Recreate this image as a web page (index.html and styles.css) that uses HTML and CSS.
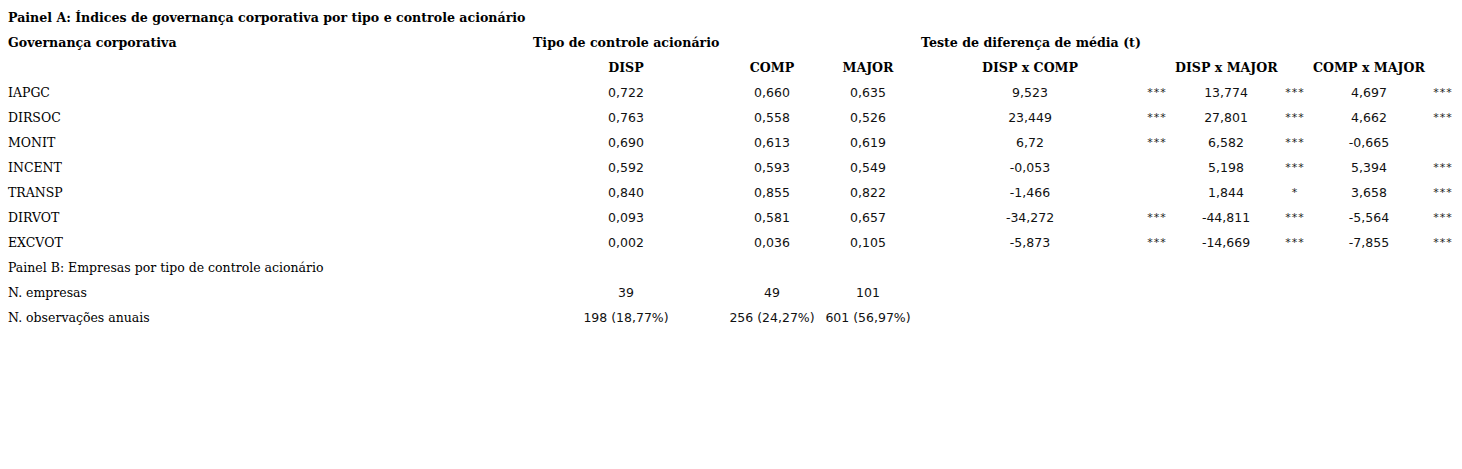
FILE: index.html
```html
<!DOCTYPE html>
<html lang="pt">
<head>
<meta charset="utf-8">
<title>Painel A</title>
<link rel="stylesheet" href="styles.css">
</head>
<body>
<div class="table">
  <div class="row title"><span class="b">Painel A: Índices de governança corporativa por tipo e controle acionário</span></div>
  <div class="row">
    <span class="b">Governança corporativa</span>
    <span class="b span3">Tipo de controle acionário</span>
    <span></span>
    <span class="b span6">Teste de diferença de média (t)</span>
  </div>
  <div class="row">
    <span></span>
    <span class="b c">DISP</span><span class="b c">COMP</span><span class="b c">MAJOR</span><span></span>
    <span class="b c">DISP x COMP</span><span></span>
    <span class="b c">DISP x MAJOR</span><span></span>
    <span class="b c">COMP x MAJOR</span><span></span>
  </div>
  <div class="row"><span>IAPGC</span><span class="n">0,722</span><span class="n">0,660</span><span class="n">0,635</span><span></span><span class="n">9,523</span><span class="s">***</span><span class="n">13,774</span><span class="s">***</span><span class="n">4,697</span><span class="s">***</span></div>
  <div class="row"><span>DIRSOC</span><span class="n">0,763</span><span class="n">0,558</span><span class="n">0,526</span><span></span><span class="n">23,449</span><span class="s">***</span><span class="n">27,801</span><span class="s">***</span><span class="n">4,662</span><span class="s">***</span></div>
  <div class="row"><span>MONIT</span><span class="n">0,690</span><span class="n">0,613</span><span class="n">0,619</span><span></span><span class="n">6,72</span><span class="s">***</span><span class="n">6,582</span><span class="s">***</span><span class="n">-0,665</span><span class="s"></span></div>
  <div class="row"><span>INCENT</span><span class="n">0,592</span><span class="n">0,593</span><span class="n">0,549</span><span></span><span class="n">-0,053</span><span class="s"></span><span class="n">5,198</span><span class="s">***</span><span class="n">5,394</span><span class="s">***</span></div>
  <div class="row"><span>TRANSP</span><span class="n">0,840</span><span class="n">0,855</span><span class="n">0,822</span><span></span><span class="n">-1,466</span><span class="s"></span><span class="n">1,844</span><span class="s">*</span><span class="n">3,658</span><span class="s">***</span></div>
  <div class="row"><span>DIRVOT</span><span class="n">0,093</span><span class="n">0,581</span><span class="n">0,657</span><span></span><span class="n">-34,272</span><span class="s">***</span><span class="n">-44,811</span><span class="s">***</span><span class="n">-5,564</span><span class="s">***</span></div>
  <div class="row"><span>EXCVOT</span><span class="n">0,002</span><span class="n">0,036</span><span class="n">0,105</span><span></span><span class="n">-5,873</span><span class="s">***</span><span class="n">-14,669</span><span class="s">***</span><span class="n">-7,855</span><span class="s">***</span></div>
  <div class="row title"><span>Painel B: Empresas por tipo de controle acionário</span></div>
  <div class="row"><span>N. empresas</span><span class="n">39</span><span class="n">49</span><span class="n">101</span></div>
  <div class="row"><span>N. observações anuais</span><span class="n">198 (18,77%)</span><span class="n">256 (24,27%)</span><span class="n">601 (56,97%)</span></div>
</div>
</body>
</html>
```
FILE: styles.css
```css
html, body {
  margin: 0;
  padding: 0;
  background: #ffffff;
}
body {
  padding: 5px 0 0 8px;
  color: #000;
  font-family: "DejaVu Serif", serif;
  font-size: 12.5px;
}
.table {
  display: flex;
  flex-direction: column;
}
.row {
  display: grid;
  grid-template-columns: 525px 186px 106px 86px 10px 218px 36px 102px 36px 112px 36px;
  height: 25px;
  align-items: center;
  white-space: nowrap;
}
.row.title {
  grid-template-columns: 1fr;
}
.b {
  font-family: "DejaVu Serif", serif;
  font-weight: bold;
  font-size: 12.6px;
}
.c {
  text-align: center;
}
.n {
  text-align: center;
  font-family: "DejaVu Sans", sans-serif;
  font-size: 12.5px;
  color: #111;
}
.s {
  text-align: center;
  font-family: "DejaVu Sans", sans-serif;
  font-size: 11px;
  letter-spacing: 1px;
  color: #222;
}
.span3 {
  grid-column: span 3;
}
.span6 {
  grid-column: span 6;
}
```
